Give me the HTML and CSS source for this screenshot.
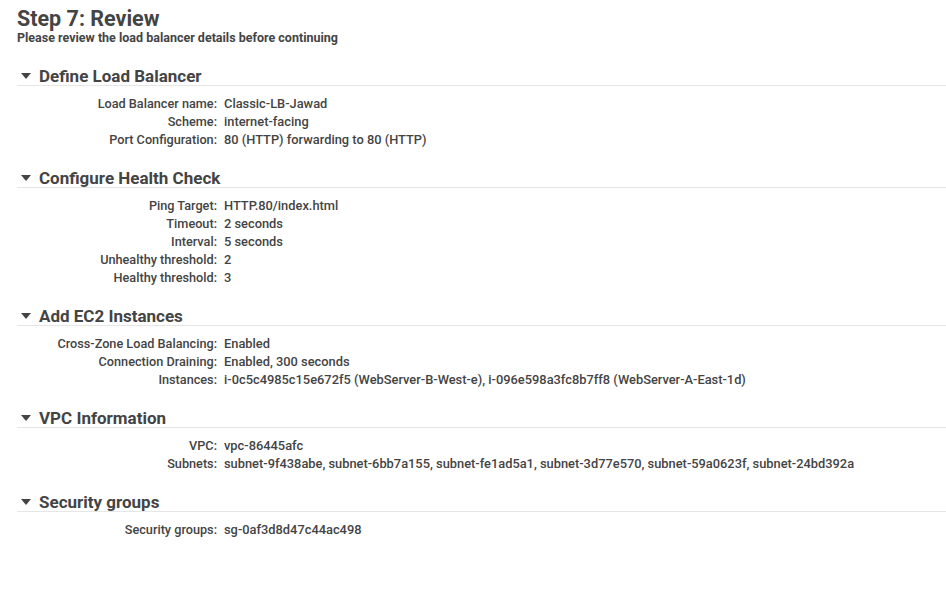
FILE: index.html
```html
<!DOCTYPE html>
<html>
<head>
<meta charset="utf-8">
<link rel="stylesheet" href="styles.css">
</head>
<body>
<div class="page">
  <h1 class="title">Step 7: Review</h1>
  <p class="subtitle">Please review the load balancer details before continuing</p>

  <section class="section">
    <h2 class="section-head"><span class="caret"></span>Define Load Balancer</h2>
    <div class="rows">
      <div class="label">Load Balancer name:</div><div class="value">Classic-LB-Jawad</div>
      <div class="label">Scheme:</div><div class="value">internet-facing</div>
      <div class="label">Port Configuration:</div><div class="value">80 (HTTP) forwarding to 80 (HTTP)</div>
    </div>
  </section>

  <section class="section">
    <h2 class="section-head"><span class="caret"></span>Configure Health Check</h2>
    <div class="rows">
      <div class="label">Ping Target:</div><div class="value">HTTP.80/index.html</div>
      <div class="label">Timeout:</div><div class="value">2 seconds</div>
      <div class="label">Interval:</div><div class="value">5 seconds</div>
      <div class="label">Unhealthy threshold:</div><div class="value">2</div>
      <div class="label">Healthy threshold:</div><div class="value">3</div>
    </div>
  </section>

  <section class="section">
    <h2 class="section-head"><span class="caret"></span>Add EC2 Instances</h2>
    <div class="rows">
      <div class="label">Cross-Zone Load Balancing:</div><div class="value">Enabled</div>
      <div class="label">Connection Draining:</div><div class="value">Enabled, 300 seconds</div>
      <div class="label">Instances:</div><div class="value">i-0c5c4985c15e672f5 (WebServer-B-West-e), i-096e598a3fc8b7ff8 (WebServer-A-East-1d)</div>
    </div>
  </section>

  <section class="section">
    <h2 class="section-head"><span class="caret"></span>VPC Information</h2>
    <div class="rows">
      <div class="label">VPC:</div><div class="value">vpc-86445afc</div>
      <div class="label">Subnets:</div><div class="value">subnet-9f438abe, subnet-6bb7a155, subnet-fe1ad5a1, subnet-3d77e570, subnet-59a0623f, subnet-24bd392a</div>
    </div>
  </section>

  <section class="section">
    <h2 class="section-head"><span class="caret"></span>Security groups</h2>
    <div class="rows">
      <div class="label">Security groups:</div><div class="value">sg-0af3d8d47c44ac498</div>
    </div>
  </section>
</div>
</body>
</html>
```

FILE: styles.css
```css
html, body {
  margin: 0;
  padding: 0;
  background: #ffffff;
}
body {
  font-family: Roboto, "Liberation Sans", sans-serif;
  color: #444444;
}
.page {
  padding: 6px 0 0 17px;
}
.title {
  margin: 0;
  font-size: 21.5px;
  font-weight: 700;
  line-height: 25px;
}
.subtitle {
  margin: 0;
  font-size: 12.5px;
  font-weight: 700;
  line-height: 14px;
}
.section {
  margin-top: 22px;
}
.section + .section {
  margin-top: 20px;
}
.section-head {
  margin: 0;
  display: flex;
  align-items: center;
  font-size: 17px;
  font-weight: 700;
  line-height: 18px;
  border-bottom: 1px solid #e6e6e6;
}
.caret {
  width: 0;
  height: 0;
  margin: 0 8px 0 4px;
  border-left: 5px solid transparent;
  border-right: 5px solid transparent;
  border-top: 6px solid #444444;
}
.rows {
  display: grid;
  grid-template-columns: 200px 1fr;
  column-gap: 7px;
  padding-top: 9px;
  font-size: 12.85px;
  font-weight: 500;
  line-height: 18px;
}
.label {
  text-align: right;
  font-size: 12.7px;
}
.value {
  white-space: nowrap;
}
```
